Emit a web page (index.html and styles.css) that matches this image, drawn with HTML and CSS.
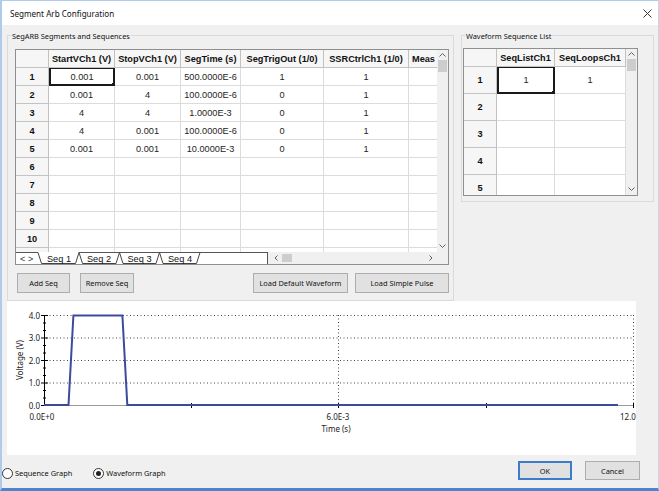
FILE: index.html
```html
<!DOCTYPE html>
<html>
<head>
<meta charset="utf-8">
<title>Segment Arb Configuration</title>
<link rel="stylesheet" href="styles.css">
</head>
<body>
<div class="window">
  <div class="titlebar">
    <span class="title">Segment Arb Configuration</span>
    <svg class="close" width="9" height="9" viewBox="0 0 9 9"><path d="M0.5 0.5L8.5 8.5M8.5 0.5L0.5 8.5" stroke="#333" stroke-width="1"/></svg>
  </div>
  <div class="content">
    <div class="top">
      <div class="group seg">
        <span class="legend">SegARB Segments and Sequences</span>
        <div class="grid seg-grid">
          <div class="grid-main">
            <div class="cells seg-cells">
              <div class="c h"></div><div class="c h">StartVCh1 (V)</div><div class="c h">StopVCh1 (V)</div><div class="c h">SegTime (s)</div><div class="c h">SegTrigOut (1/0)</div><div class="c h">SSRCtrlCh1 (1/0)</div><div class="c h left">Meas</div>
              <div class="c rh">1</div><div class="c sel">0.001</div><div class="c">0.001</div><div class="c">500.0000E-6</div><div class="c">1</div><div class="c">1</div><div class="c"></div>
              <div class="c rh">2</div><div class="c">0.001</div><div class="c">4</div><div class="c">100.0000E-6</div><div class="c">0</div><div class="c">1</div><div class="c"></div>
              <div class="c rh">3</div><div class="c">4</div><div class="c">4</div><div class="c">1.0000E-3</div><div class="c">0</div><div class="c">1</div><div class="c"></div>
              <div class="c rh">4</div><div class="c">4</div><div class="c">0.001</div><div class="c">100.0000E-6</div><div class="c">0</div><div class="c">1</div><div class="c"></div>
              <div class="c rh">5</div><div class="c">0.001</div><div class="c">0.001</div><div class="c">10.0000E-3</div><div class="c">0</div><div class="c">1</div><div class="c"></div>
              <div class="c rh">6</div><div class="c"></div><div class="c"></div><div class="c"></div><div class="c"></div><div class="c"></div><div class="c"></div>
              <div class="c rh">7</div><div class="c"></div><div class="c"></div><div class="c"></div><div class="c"></div><div class="c"></div><div class="c"></div>
              <div class="c rh">8</div><div class="c"></div><div class="c"></div><div class="c"></div><div class="c"></div><div class="c"></div><div class="c"></div>
              <div class="c rh">9</div><div class="c"></div><div class="c"></div><div class="c"></div><div class="c"></div><div class="c"></div><div class="c"></div>
              <div class="c rh">10</div><div class="c"></div><div class="c"></div><div class="c"></div><div class="c"></div><div class="c"></div><div class="c"></div>
              <div class="c rh"></div><div class="c"></div><div class="c"></div><div class="c"></div><div class="c"></div><div class="c"></div><div class="c"></div>
            </div>
            <div class="vscroll">
              <svg class="arrow" width="7" height="4" viewBox="0 0 7 4"><path d="M0.5 3.5L3.5 0.5L6.5 3.5" fill="none" stroke="#606060"/></svg>
              <div class="thumb"></div>
              <div class="fill"></div>
              <svg class="arrow" width="7" height="4" viewBox="0 0 7 4"><path d="M0.5 0.5L3.5 3.5L6.5 0.5" fill="none" stroke="#606060"/></svg>
            </div>
          </div>
          <svg class="tabstrip" width="432" height="12" viewBox="0 0 432 12">
            <rect x="0" y="0" width="252" height="12" fill="#ffffff"/>
            <rect x="252" y="0" width="180" height="12" fill="#f0f0f0"/>
            <path d="M0 0.5H22M63 0.5H252" stroke="#555" stroke-width="1"/>
            <text x="4" y="9.5" class="nav">&lt;</text>
            <text x="12" y="9.5" class="nav">&gt;</text>
            <path d="M22 0.5L25.5 11.5H59.5L63 0.5L66.5 11.5H100L103.5 0.5L107 11.5H140L143.5 0.5L147 11.5H180.5L184 0.5" fill="none" stroke="#444" stroke-width="1"/>
            <text x="43" y="10" class="tab" text-anchor="middle">Seq 1</text>
            <text x="83" y="10" class="tab" text-anchor="middle">Seq 2</text>
            <text x="123.5" y="10" class="tab" text-anchor="middle">Seq 3</text>
            <text x="164" y="10" class="tab" text-anchor="middle">Seq 4</text>
            <path d="M251.5 0V12" stroke="#555" stroke-width="1"/>
            <path d="M261.5 3.5L259 6L261.5 8.5" fill="none" stroke="#606060"/>
            <rect x="266" y="2" width="10" height="8" fill="#cdcdcd"/>
            <path d="M413.5 3.5L416 6L413.5 8.5" fill="none" stroke="#606060"/>
          </svg>
        </div>
        <div class="btnrow">
          <button class="btn b-add">Add Seq</button>
          <button class="btn b-remove">Remove Seq</button>
          <button class="btn b-default">Load Default Waveform</button>
          <button class="btn b-pulse">Load Simple Pulse</button>
        </div>
      </div>
      <div class="group wsl">
        <span class="legend">Waveform Sequence List</span>
        <div class="grid wsl-grid">
          <div class="grid-main">
            <div class="cells wsl-cells">
              <div class="c h"></div><div class="c h">SeqListCh1</div><div class="c h">SeqLoopsCh1</div>
              <div class="c rh">1</div><div class="c sel">1</div><div class="c">1</div>
              <div class="c rh">2</div><div class="c"></div><div class="c"></div>
              <div class="c rh">3</div><div class="c"></div><div class="c"></div>
              <div class="c rh">4</div><div class="c"></div><div class="c"></div>
              <div class="c rh">5</div><div class="c"></div><div class="c"></div>
            </div>
            <div class="vscroll">
              <svg class="arrow" width="7" height="4" viewBox="0 0 7 4"><path d="M0.5 3.5L3.5 0.5L6.5 3.5" fill="none" stroke="#606060"/></svg>
              <div class="thumb"></div>
              <div class="fill"></div>
              <svg class="arrow" width="7" height="4" viewBox="0 0 7 4"><path d="M0.5 0.5L3.5 3.5L6.5 0.5" fill="none" stroke="#606060"/></svg>
            </div>
          </div>
        </div>
      </div>
    </div>
    <div class="chart">
      <svg width="629" height="154" viewBox="0 0 629 154">
        <g class="grid-dots" stroke="#444" stroke-width="1" stroke-dasharray="1 2.5">
          <path d="M39 14.5H626"/>
          <path d="M39 37H626"/>
          <path d="M39 59.5H626"/>
          <path d="M39 82H626"/>
          <path d="M331.5 14V104"/>
          <path d="M626.5 14V104"/>
        </g>
        <path d="M37 104.5H626" stroke="#9a9a9a" stroke-width="1"/>
        <path d="M37.5 14V105" stroke="#000" stroke-width="1"/>
        <g stroke="#000" stroke-width="1">
          <path d="M34 14.5H41M34 37H41M34 59.5H41M34 82H41M34 104.5H41"/>
          <path d="M36 22H39M36 29.5H39M36 44.5H39M36 52H39M36 67H39M36 74.5H39M36 89.5H39M36 97H39"/>
          <path d="M184.5 102V107M331.5 102V107M479.5 102V107M626.5 102V107"/>
        </g>
        <polyline points="37,104 61.5,104 66.4,14.5 115.4,14.5 120.3,104 611,104" fill="none" stroke="#3c4a9e" stroke-width="2"/>
        <g class="axis-text">
          <text x="33" y="17.5" text-anchor="end">4.0</text>
          <text x="33" y="40" text-anchor="end">3.0</text>
          <text x="33" y="62.5" text-anchor="end">2.0</text>
          <text x="33" y="85" text-anchor="end">1.0</text>
          <text x="33" y="107.5" text-anchor="end">0.0</text>
          <text x="35" y="119" text-anchor="middle">0.0E+0</text>
          <text x="331" y="119" text-anchor="middle">6.0E-3</text>
          <text x="613" y="119">12.0E-3</text>
          <text x="329" y="131" text-anchor="middle">Time (s)</text>
          <text x="0" y="0" text-anchor="middle" transform="translate(16 59) rotate(-90)">Voltage (V)</text>
        </g>
      </svg>
    </div>
    <div class="footer">
      <label class="radio r1"><span class="dot"></span>Sequence Graph</label>
      <label class="radio r2"><span class="dot on"></span>Waveform Graph</label>
      <button class="btn b-ok">OK</button>
      <button class="btn b-cancel">Cancel</button>
    </div>
  </div>
</div>
</body>
</html>
```
FILE: styles.css
```css
html, body {
  margin: 0;
  padding: 0;
}
body {
  width: 659px;
  height: 491px;
  overflow: hidden;
  background: #ffffff;
}
.window {
  box-sizing: border-box;
  width: 659px;
  height: 491px;
  border-top: 1px solid #aecbe9;
  border-left: 2px solid #aecbe9;
  border-right: 1px solid #c7d6e6;
  border-bottom: 3px solid #4b86cc;
  display: flex;
  flex-direction: column;
  font-family: "Noto Sans", "Open Sans", sans-serif;
  font-size: 7.8px;
  color: #000;
  overflow: hidden;
}
.titlebar {
  height: 24px;
  flex: none;
  background: #ffffff;
  display: flex;
  align-items: center;
  padding-left: 8px;
  padding-right: 6px;
}
.title {
  font-size: 8.1px;
  color: #111;
  margin-top: 1px;
}
.close {
  margin-left: auto;
  margin-right: 0;
  margin-top: 0;
}
.content {
  flex: 1;
  background: #f0f0f0;
  display: flex;
  flex-direction: column;
}
.top {
  height: 276px;
  flex: none;
  display: flex;
  align-items: flex-start;
}
.group {
  position: relative;
  box-sizing: border-box;
  border: 1px solid #dadada;
  margin-top: 10px;
}
.legend {
  position: absolute;
  top: -6px;
  left: 3px;
  padding: 0 1px;
  background: #f0f0f0;
  line-height: 12px;
  font-size: 7.4px;
  color: #111;
}
.seg {
  margin-left: 5px;
  width: 447px;
  height: 266px;
  padding: 13px 0 0 7px;
}
.wsl {
  margin-left: 7px;
  width: 193px;
  height: 167px;
  padding: 12px 0 0 1px;
}
.grid {
  box-sizing: border-box;
  border: 1px solid #8f8f8f;
  background: #f0f0f0;
  display: flex;
  flex-direction: column;
}
.seg-grid {
  width: 434px;
  height: 216px;
}
.wsl-grid {
  width: 175px;
  height: 148px;
}
.grid-main {
  display: flex;
  flex: 1;
  overflow: hidden;
}
.cells {
  display: grid;
  overflow: hidden;
  background: #fff;
  align-content: start;
}
.seg-cells {
  width: 421px;
  grid-template-columns: 33px 66px 66px 60px 83px 85px 60px;
  grid-auto-rows: 18px;
}
.wsl-cells {
  width: 162px;
  grid-template-columns: 33px 58px 71px;
  grid-template-rows: 18px;
  grid-auto-rows: 27px;
}
.c {
  box-sizing: border-box;
  position: relative;
  border-right: 1px solid #dcdcdc;
  border-bottom: 1px solid #dcdcdc;
  background: #ffffff;
  display: flex;
  align-items: center;
  justify-content: center;
  font-family: "Liberation Sans", Arial, sans-serif;
  font-size: 9.2px;
  color: #1e1e1e;
  white-space: nowrap;
  overflow: hidden;
}
.h, .rh {
  background: #f6f6f6;
  font-weight: bold;
  color: #111;
  border-right-color: #c2c2c2;
  border-bottom-color: #c2c2c2;
}
.h.left {
  justify-content: flex-start;
  padding-left: 3px;
}
.sel {
  border: 2px solid #1a1a1a;
  border-top-width: 1px;
  overflow: visible;
}
.sel::after {
  content: "";
  position: absolute;
  right: -3px;
  bottom: -3px;
  width: 4px;
  height: 4px;
  background: #1a1a1a;
}
.vscroll {
  width: 11px;
  flex: none;
  background: #f0f0f0;
  display: flex;
  flex-direction: column;
  align-items: center;
}
.vscroll .arrow {
  flex: none;
  margin-top: 3px;
}
.vscroll .arrow:last-child {
  margin-top: 0;
  margin-bottom: 4px;
}
.thumb {
  width: 9px;
  height: 12px;
  background: #cdcdcd;
  margin-top: 3px;
  flex: none;
}
.fill {
  flex: 1;
}
.tabstrip {
  display: block;
  flex: none;
}
.tabstrip .nav {
  font-family: "Liberation Sans", Arial, sans-serif;
  font-size: 9px;
  fill: #333;
}
.tabstrip .tab {
  font-family: "Liberation Sans", Arial, sans-serif;
  font-size: 9.2px;
  fill: #111;
}
.btnrow {
  display: flex;
  margin-top: 8px;
  height: 20px;
}
.btn {
  box-sizing: border-box;
  height: 20px;
  border: 1px solid #adadad;
  background: #e1e1e1;
  font-family: "Noto Sans", "Open Sans", sans-serif;
  font-size: 7.4px;
  color: #111;
  padding: 0;
  margin: 0;
  flex: none;
}
.b-add { margin-left: 2px; width: 53px; }
.b-remove { margin-left: 10px; width: 54px; }
.b-default { margin-left: 119px; width: 95px; }
.b-pulse { margin-left: 7px; width: 94px; }
.chart {
  margin-left: 5px;
  width: 629px;
  height: 154px;
  flex: none;
  background: #ffffff;
}
.chart svg {
  display: block;
}
.axis-text text {
  font-family: "Noto Sans", "Open Sans", sans-serif;
  font-size: 8px;
  fill: #222;
}
.footer {
  flex: 1;
  display: flex;
  align-items: flex-start;
  padding-top: 6px;
  padding-right: 18px;
}
.radio {
  display: flex;
  align-items: center;
  height: 12px;
  margin-top: 6px;
  font-size: 7.4px;
  color: #111;
  flex: none;
}
.r1 { margin-left: 0; }
.r2 { margin-left: 21px; }
.dot {
  box-sizing: border-box;
  width: 11px;
  height: 11px;
  border: 1px solid #333;
  border-radius: 50%;
  background: #fff;
  margin-right: 2px;
  position: relative;
}
.dot.on::after {
  content: "";
  position: absolute;
  left: 2px;
  top: 2px;
  width: 5px;
  height: 5px;
  border-radius: 50%;
  background: #222;
}
.b-ok {
  margin-left: auto;
  width: 54px;
  height: 19px;
  border: 2px solid #3d7cc9;
}
.b-cancel {
  margin-left: 13px;
  width: 55px;
  height: 19px;
}
```
